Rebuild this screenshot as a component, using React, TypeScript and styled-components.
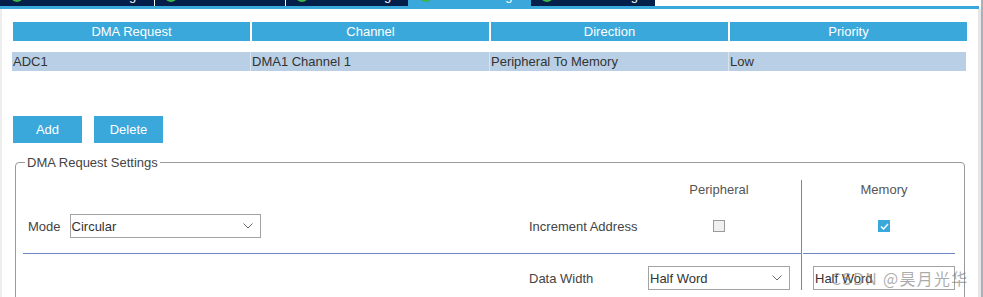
import React from 'react';
import styled, { createGlobalStyle } from 'styled-components';

const Global = createGlobalStyle`
  html, body { margin: 0; padding: 0; background: #fff; }
  body { font-family: "Liberation Sans", Arial, sans-serif; font-size: 13px; }
  * { box-sizing: border-box; }
`;

const Page = styled.div`
  position: relative;
  width: 983px;
  height: 297px;
  overflow: hidden;
  display: flex;
  background: #fff;
`;

const Main = styled.div`
  width: 981px;
  display: flex;
  flex-direction: column;
`;

const ScrollEdge = styled.div`
  width: 2px;
  background: #a9b0b8;
`;

const TabBar = styled.div`
  display: flex;
  height: 6px;
`;

const Tab = styled.div<{ $w: number; $active?: boolean; $gap?: boolean }>`
  flex-shrink: 0;
  width: ${(p) => p.$w}px;
  margin-right: ${(p) => (p.$gap ? 1 : 0)}px;
  height: 6px;
  overflow: hidden;
  background: ${(p) => (p.$active ? '#3aa8db' : '#04204a')};
  display: flex;
  align-items: flex-end;
  justify-content: center;
  color: #fff;
`;

const TabInner = styled.div`
  display: flex;
  align-items: center;
  gap: 8px;
  margin-bottom: 3px;
  line-height: 15px;
  white-space: nowrap;
`;

const TabIcon = styled.span`
  width: 12px;
  height: 12px;
  border-radius: 50%;
  background: #3db54a;
`;

const BlueLine = styled.div`
  height: 3px;
  width: 979px;
  background: #3aa8db;
`;

const Body = styled.div`
  flex: 1;
  display: flex;
  min-height: 0;
`;

const LeftStrip = styled.div`
  width: 2px;
  background: #eeeeee;
`;

const RightStrip = styled.div`
  width: 3px;
  background: #e6e6e6;
`;

const Content = styled.div`
  flex: 1;
  display: flex;
  flex-direction: column;
  padding-top: 13px;
`;

const HeaderRow = styled.div`
  display: grid;
  grid-template-columns: repeat(4, 237px);
  column-gap: 2px;
  margin-left: 11px;
`;

const HeaderCell = styled.div`
  height: 19px;
  line-height: 19px;
  background: #3aa8db;
  color: #fff;
  text-align: center;
`;

const DataRow = styled.div`
  display: grid;
  grid-template-columns: 238px 238px 238px 237px;
  column-gap: 1px;
  width: 954px;
  margin: 11px 0 0 10px;
  background: #dbe4ee;
`;

const DataCell = styled.div`
  height: 19px;
  line-height: 19px;
  padding-left: 1px;
  background: #b8cfe5;
  color: #333;
`;

const ButtonRow = styled.div`
  display: flex;
  gap: 12px;
  margin: 45px 0 0 11px;
`;

const Button = styled.button`
  width: 69px;
  height: 27px;
  padding: 0;
  border: none;
  background: #3aa8db;
  color: #fff;
  font: 13px "Liberation Sans", Arial, sans-serif;
`;

const Fieldset = styled.fieldset`
  width: 950px;
  height: 170px;
  flex-shrink: 0;
  margin: 12px 0 0 13px;
  padding: 10px 0 0 7px;
  border: 1px solid #9a9a9a;
  border-radius: 4px;
  min-inline-size: 0;
`;

const Legend = styled.legend`
  margin-left: 2px;
  padding: 0 2px;
  line-height: 15px;
  color: #444;
`;

const SettingsGrid = styled.div`
  display: grid;
  grid-template-columns: 506px 119px 142px 11px 1px 1px 10px 142px;
  grid-template-rows: 30px 32px 24px 24px;
`;

const ColHead = styled.div<{ $col: number }>`
  grid-column: ${(p) => p.$col};
  grid-row: 1;
  padding-top: 2px;
  text-align: center;
  line-height: 15px;
  color: #555;
`;

const VLine = styled.div`
  grid-column: 5;
  grid-row: 1 / span 4;
  background: #6b86c2;
`;

const HLine = styled.div<{ $cols: string }>`
  grid-column: ${(p) => p.$cols};
  grid-row: 3;
  align-self: start;
  margin-top: 11px;
  height: 1px;
  background: #6b86c2;
`;

const ModeArea = styled.div`
  grid-column: 1;
  grid-row: 2;
  display: flex;
  align-items: center;
  gap: 9px;
  padding-left: 5px;
`;

const Label = styled.span<{ $row?: number }>`
  grid-column: 2;
  grid-row: ${(p) => p.$row ?? 'auto'};
  align-self: center;
  color: #444;
`;

const ModeLabel = styled.span`
  color: #444;
`;

const Cell = styled.div<{ $col: number; $row: number }>`
  grid-column: ${(p) => p.$col};
  grid-row: ${(p) => p.$row};
  display: flex;
  align-items: center;
  justify-content: center;
`;

const Select = styled.div<{ $w?: number }>`
  width: ${(p) => (p.$w ? `${p.$w}px` : '100%')};
  height: 24px;
  border: 1px solid #a3a3a3;
  background: #fff;
  display: flex;
  align-items: center;
  justify-content: space-between;
  padding: 0 7px 0 1px;
  color: #333;
`;

const Check = styled.span<{ $on?: boolean }>`
  width: 12px;
  height: 12px;
  border: 1px solid ${(p) => (p.$on ? '#3aa8db' : '#9a9a9a')};
  background: ${(p) => (p.$on ? '#3aa8db' : '#f0f0f2')};
  display: flex;
  align-items: center;
  justify-content: center;
`;

const Watermark = styled.div`
  position: absolute;
  left: 831px;
  top: 268px;
  font-family: "Noto Sans CJK SC", "Liberation Sans", sans-serif;
  font-size: 16px;
  line-height: 20px;
  letter-spacing: 1.3px;
  color: rgba(115, 115, 115, 0.6);
  white-space: nowrap;
  pointer-events: none;
`;

const Chevron = () => (
  <svg width="10" height="6" viewBox="0 0 10 6">
    <polyline points="0.5,0.5 5,5 9.5,0.5" fill="none" stroke="#6a6a6a" strokeWidth="1" />
  </svg>
);

const Tick = () => (
  <svg width="9" height="7" viewBox="0 0 9 7">
    <polyline points="1,3.5 3.5,6 8,1" fill="none" stroke="#fff" strokeWidth="1.4" />
  </svg>
);

const tabs = [
  { w: 154, label: 'Parameter Settings', gap: true },
  { w: 130, label: 'User Constants', gap: true },
  { w: 122, label: 'NVIC Settings' },
  { w: 123, label: 'DMA Settings', active: true },
  { w: 124, label: 'GPIO Settings' },
];

export default function App() {
  return (
    <>
      <Global />
      <Page>
        <Main>
          <TabBar>
            {tabs.map((t) => (
              <Tab key={t.label} $w={t.w} $active={t.active} $gap={t.gap}>
                <TabInner>
                  <TabIcon />
                  {t.label}
                </TabInner>
              </Tab>
            ))}
          </TabBar>
          <BlueLine />
          <Body>
            <LeftStrip />
            <Content>
              <HeaderRow>
                <HeaderCell>DMA Request</HeaderCell>
                <HeaderCell>Channel</HeaderCell>
                <HeaderCell>Direction</HeaderCell>
                <HeaderCell>Priority</HeaderCell>
              </HeaderRow>
              <DataRow>
                <DataCell>ADC1</DataCell>
                <DataCell>DMA1 Channel 1</DataCell>
                <DataCell>Peripheral To Memory</DataCell>
                <DataCell>Low</DataCell>
              </DataRow>
              <ButtonRow>
                <Button>Add</Button>
                <Button>Delete</Button>
              </ButtonRow>
              <Fieldset>
                <Legend>DMA Request Settings</Legend>
                <SettingsGrid>
                  <ColHead $col={3}>Peripheral</ColHead>
                  <ColHead $col={8}>Memory</ColHead>
                  <VLine />
                  <ModeArea>
                    <ModeLabel>Mode</ModeLabel>
                    <Select $w={191}>
                      Circular
                      <Chevron />
                    </Select>
                  </ModeArea>
                  <Label $row={2}>Increment Address</Label>
                  <Cell $col={3} $row={2}>
                    <Check />
                  </Cell>
                  <Cell $col={8} $row={2}>
                    <Check $on>
                      <Tick />
                    </Check>
                  </Cell>
                  <HLine $cols="1 / 5" />
                  <HLine $cols="7 / 9" />
                  <Label $row={4}>Data Width</Label>
                  <Cell $col={3} $row={4}>
                    <Select>
                      Half Word
                      <Chevron />
                    </Select>
                  </Cell>
                  <Cell $col={8} $row={4}>
                    <Select>Half Word</Select>
                  </Cell>
                </SettingsGrid>
              </Fieldset>
            </Content>
            <RightStrip />
          </Body>
        </Main>
        <ScrollEdge />
        <Watermark>CSDN @昊月光华</Watermark>
      </Page>
    </>
  );
}
